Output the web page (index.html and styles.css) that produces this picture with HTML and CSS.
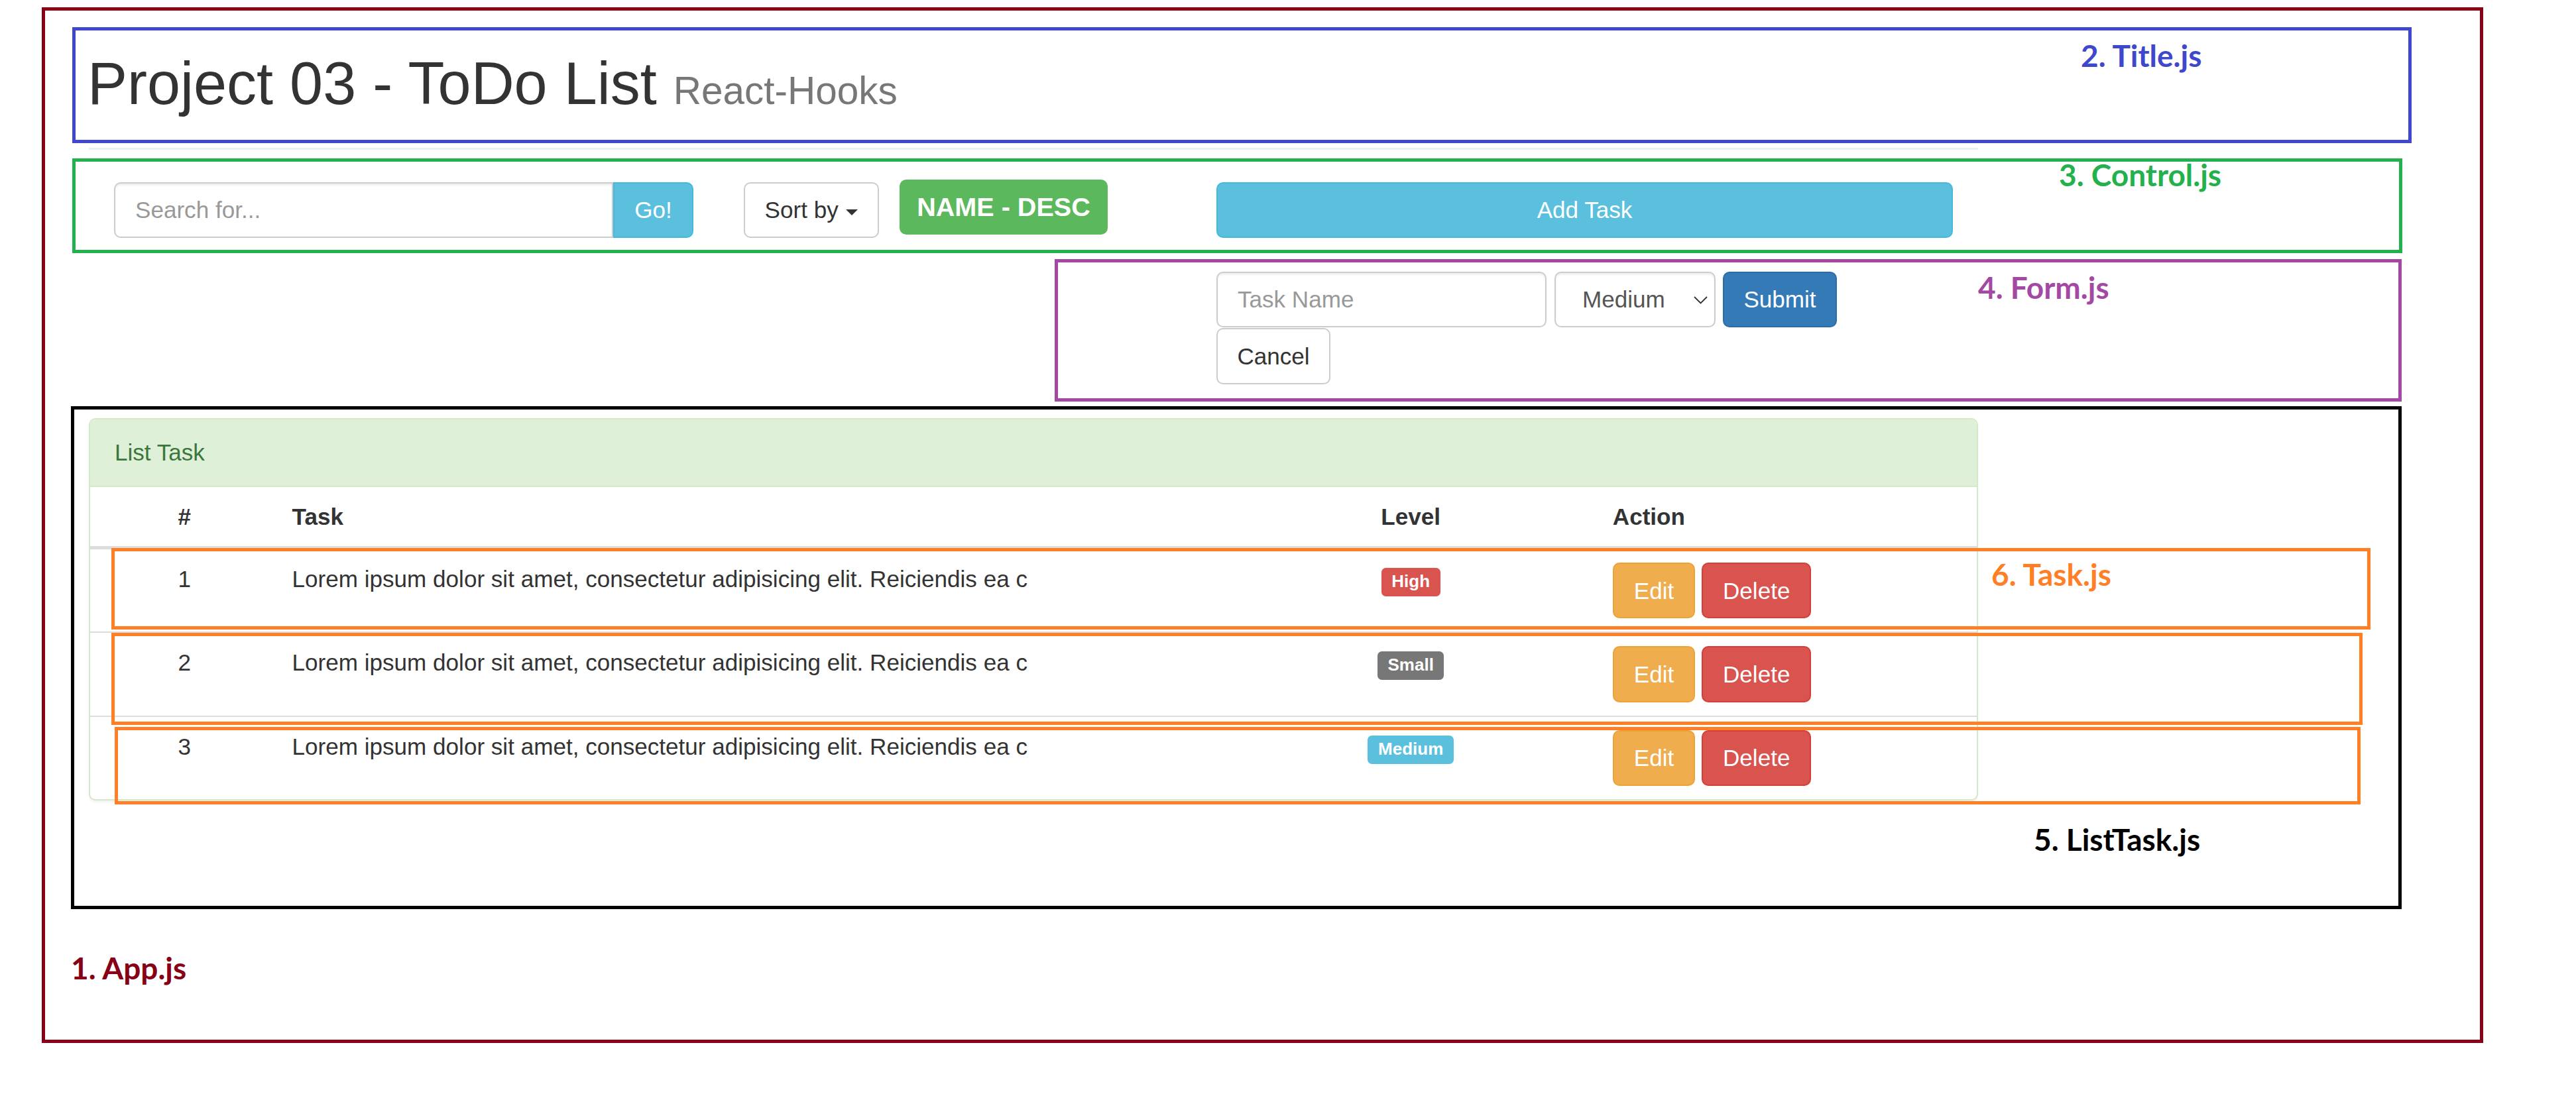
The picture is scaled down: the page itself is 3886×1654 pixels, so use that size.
FILE: index.html
```html
<!DOCTYPE html>
<html lang="en">
<head>
<meta charset="utf-8">
<title>Project 03 - ToDo List</title>
<link rel="stylesheet" href="styles.css">
</head>
<body>
<div class="app">
  <div class="frame title-frame">
    <h1 class="page-title">Project 03 - ToDo List <small>React-Hooks</small></h1>
    <span class="note note-blue note-title">2. Title.js</span>
  </div>
  <div class="header-rule"></div>

  <div class="frame control-frame">
    <div class="search-group">
      <input class="form-control search-input" type="text" placeholder="Search for...">
      <button class="btn btn-info go-btn" type="button">Go!</button>
    </div>
    <button class="btn btn-default sort-btn" type="button">Sort by <span class="caret"></span></button>
    <span class="sort-label">NAME - DESC</span>
    <button class="btn btn-info add-btn" type="button">Add Task</button>
    <span class="note note-green note-control">3. Control.js</span>
  </div>

  <div class="frame form-frame">
    <div class="form-row">
      <input class="form-control task-input" type="text" placeholder="Task Name">
      <div class="select-wrap">
        <select class="form-control level-select">
          <option>Small</option>
          <option selected>Medium</option>
          <option>High</option>
        </select>
        <svg class="chevron" width="21" height="12" viewBox="0 0 21 12"><polyline points="1,1 10.5,10.5 20,1" fill="none" stroke="#333" stroke-width="1.8"/></svg>
      </div>
      <button class="btn btn-primary submit-btn" type="button">Submit</button>
    </div>
    <button class="btn btn-default cancel-btn" type="button">Cancel</button>
    <span class="note note-purple note-form">4. Form.js</span>
  </div>

  <div class="frame list-frame">
    <div class="panel">
      <div class="panel-heading">List Task</div>
      <table class="table">
        <thead>
          <tr>
            <th class="col-num text-center">#</th>
            <th class="col-task">Task</th>
            <th class="col-level text-center">Level</th>
            <th class="col-action">Action</th>
          </tr>
        </thead>
        <tbody>
          <tr>
            <td class="text-center">1</td>
            <td>Lorem ipsum dolor sit amet, consectetur adipisicing elit. Reiciendis ea c</td>
            <td class="text-center"><span class="label label-danger">High</span></td>
            <td><button class="btn btn-warning" type="button">Edit</button> <button class="btn btn-danger" type="button">Delete</button></td>
          </tr>
          <tr>
            <td class="text-center">2</td>
            <td>Lorem ipsum dolor sit amet, consectetur adipisicing elit. Reiciendis ea c</td>
            <td class="text-center"><span class="label label-default">Small</span></td>
            <td><button class="btn btn-warning" type="button">Edit</button> <button class="btn btn-danger" type="button">Delete</button></td>
          </tr>
          <tr>
            <td class="text-center">3</td>
            <td>Lorem ipsum dolor sit amet, consectetur adipisicing elit. Reiciendis ea c</td>
            <td class="text-center"><span class="label label-info">Medium</span></td>
            <td><button class="btn btn-warning" type="button">Edit</button> <button class="btn btn-danger" type="button">Delete</button></td>
          </tr>
        </tbody>
      </table>
    </div>
    <div class="task-box task-box-1"></div>
    <div class="task-box task-box-2"></div>
    <div class="task-box task-box-3"></div>
    <span class="note note-orange note-task">6. Task.js</span>
    <span class="note note-black note-list">5. ListTask.js</span>
  </div>

  <div class="note note-red note-app">1. App.js</div>
</div>
</body>
</html>
```

FILE: styles.css
```css
* {
  box-sizing: border-box;
}

body {
  margin: 0;
  background: #fff;
  color: #333;
  font-family: "Liberation Sans", Arial, Helvetica, sans-serif;
  font-size: 35.1px;
  line-height: 49.6px;
}

/* ---------- annotation frames ---------- */
.app {
  position: relative;
  width: 3683px;
  height: 1563px;
  margin: 11px 0 0 63px;
  border: 5px solid #880015;
  padding: 25px 0 0 41px;
}

.frame {
  position: relative;
  border: 5px solid;
}

.title-frame {
  width: 3529px;
  height: 175px;
  border-color: #3f48cc;
  padding: 31px 0 0 18px;
}

.header-rule {
  width: 2850px;
  margin: 7px 0 13px 25px;
  border-top: 3px solid #eee;
}

.control-frame {
  width: 3515px;
  height: 143px;
  border-color: #22b14c;
  display: flex;
  align-items: flex-start;
  padding: 31px 0 0 58px;
}

.form-frame {
  width: 2032px;
  height: 215px;
  margin: 9px 0 0 1482px;
  border-color: #a349a4;
  padding: 14px 0 0 239px;
}

.list-frame {
  width: 3516px;
  height: 759px;
  margin: 7px 0 0 -2px;
  border-color: #000;
  padding: 13px 0 0 22px;
}

.task-box {
  position: absolute;
  border: 5px solid #ff7f27;
}

.task-box-1 { left: 56px; top: 209px; width: 3408px; height: 123px; }
.task-box-2 { left: 56px; top: 337px; width: 3396px; height: 139px; }
.task-box-3 { left: 61px; top: 479px; width: 3388px; height: 117px; }

.note {
  font-family: Lato, "Open Sans", sans-serif;
  font-weight: 700;
  font-size: 46px;
  line-height: 46px;
  white-space: nowrap;
}

.note-title, .note-control, .note-form, .note-task, .note-list {
  position: absolute;
}

.note-blue { color: #3f48cc; }
.note-green { color: #22b14c; }
.note-purple { color: #a349a4; }
.note-orange { color: #ff7f27; }
.note-black { color: #000; }
.note-red { color: #880015; }

.note-title { left: 3025px; top: 15px; }
.note-control { left: 2992px; top: -3px; }
.note-form { left: 1388px; top: 15px; }
.note-task { left: 2892px; top: 226px; }
.note-list { left: 2956px; top: 626px; }
.note-app { margin: 66px 0 0 -2px; }

/* ---------- title ---------- */
.page-title {
  margin: 0;
  font-size: 90px;
  line-height: 98px;
  font-weight: 500;
  color: #333;
}

.page-title small {
  font-size: 65%;
  line-height: 1;
  font-weight: 400;
  color: #777;
}

/* ---------- form controls ---------- */
.form-control {
  display: block;
  height: 84.3px;
  padding: 15px 30px;
  font-family: inherit;
  font-size: 35.1px;
  line-height: 49.6px;
  color: #555;
  background: #fff;
  border: 2.5px solid #ccc;
  border-radius: 10px;
  box-shadow: inset 0 2.5px 2.5px rgba(0, 0, 0, 0.075);
  outline: none;
}

.form-control::placeholder {
  color: #999;
}

.btn {
  display: inline-block;
  height: 84.3px;
  margin: 0;
  padding: 15px 30px;
  font-family: inherit;
  font-size: 35.1px;
  line-height: 49.6px;
  font-weight: 400;
  text-align: center;
  white-space: nowrap;
  vertical-align: middle;
  border: 2.5px solid transparent;
  border-radius: 10px;
  cursor: pointer;
}

.btn-default { color: #333; background: #fff; border-color: #ccc; }
.btn-info { color: #fff; background: #5bc0de; border-color: #46b8da; }
.btn-primary { color: #fff; background: #337ab7; border-color: #2e6da4; }
.btn-warning { color: #fff; background: #f0ad4e; border-color: #eea236; }
.btn-danger { color: #fff; background: #d9534f; border-color: #d43f3a; }

/* ---------- control ---------- */
.search-group {
  display: flex;
  width: 874px;
}

.search-input {
  width: 753px;
  border-radius: 10px 0 0 10px;
}

.go-btn {
  width: 121px;
  padding: 15px 0;
  border-radius: 0 10px 10px 0;
}

.sort-btn {
  width: 204px;
  margin-left: 76px;
  padding: 15px 0;
}

.caret {
  display: inline-block;
  width: 0;
  height: 0;
  margin-left: 2px;
  vertical-align: middle;
  border-top: 9px dashed;
  border-right: 9px solid transparent;
  border-left: 9px solid transparent;
}

.sort-label {
  display: flex;
  align-items: center;
  justify-content: center;
  width: 314px;
  height: 83px;
  margin: -4px 0 0 31px;
  background: #5cb85c;
  color: #fff;
  font-size: 39.6px;
  font-weight: 700;
  line-height: 1;
  border-radius: 10px;
}

.add-btn {
  width: 1111px;
  margin-left: 164px;
}

/* ---------- form ---------- */
.form-row {
  display: flex;
}

.task-input {
  width: 498px;
}

.select-wrap {
  position: relative;
  margin-left: 12px;
}

.level-select {
  width: 243px;
  padding: 15px 30px 15px 40px;
  appearance: none;
  -webkit-appearance: none;
}

.chevron {
  position: absolute;
  left: 210px;
  top: 37px;
  pointer-events: none;
}

.submit-btn {
  width: 172px;
  margin-left: 11px;
  padding: 15px 0;
}

.cancel-btn {
  display: block;
  width: 172px;
  margin-top: 1px;
  padding: 15px 0;
}

/* ---------- list ---------- */
.panel {
  width: 2850px;
  background: #fff;
  border: 2.5px solid #d6e9c6;
  border-radius: 10px;
  box-shadow: 0 2.5px 2.5px rgba(0, 0, 0, 0.05);
  overflow: hidden;
}

.panel-heading {
  padding: 25px 37px;
  background: #dff0d8;
  color: #3c763d;
  border-bottom: 2.5px solid #d6e9c6;
}

.table {
  width: 100%;
  border-collapse: collapse;
  border-spacing: 0;
}

.table th {
  padding: 20px;
  text-align: left;
  font-weight: 700;
  vertical-align: bottom;
  border-bottom: 5px solid #ddd;
}

.table td {
  padding: 20px;
  vertical-align: top;
  border-top: 2.5px solid #ddd;
}

.table .text-center {
  text-align: center;
}

.col-num { width: 10%; }
.col-task { width: 50%; }
.col-level { width: 20%; }
.col-action { width: 20%; }

.label {
  display: inline;
  padding: 5.2px 15.6px 7.8px;
  font-size: 26px;
  font-weight: 700;
  line-height: 1;
  color: #fff;
  white-space: nowrap;
  vertical-align: baseline;
  border-radius: 6.5px;
}

.label-danger { background: #d9534f; }
.label-default { background: #777; }
.label-info { background: #5bc0de; }
```
